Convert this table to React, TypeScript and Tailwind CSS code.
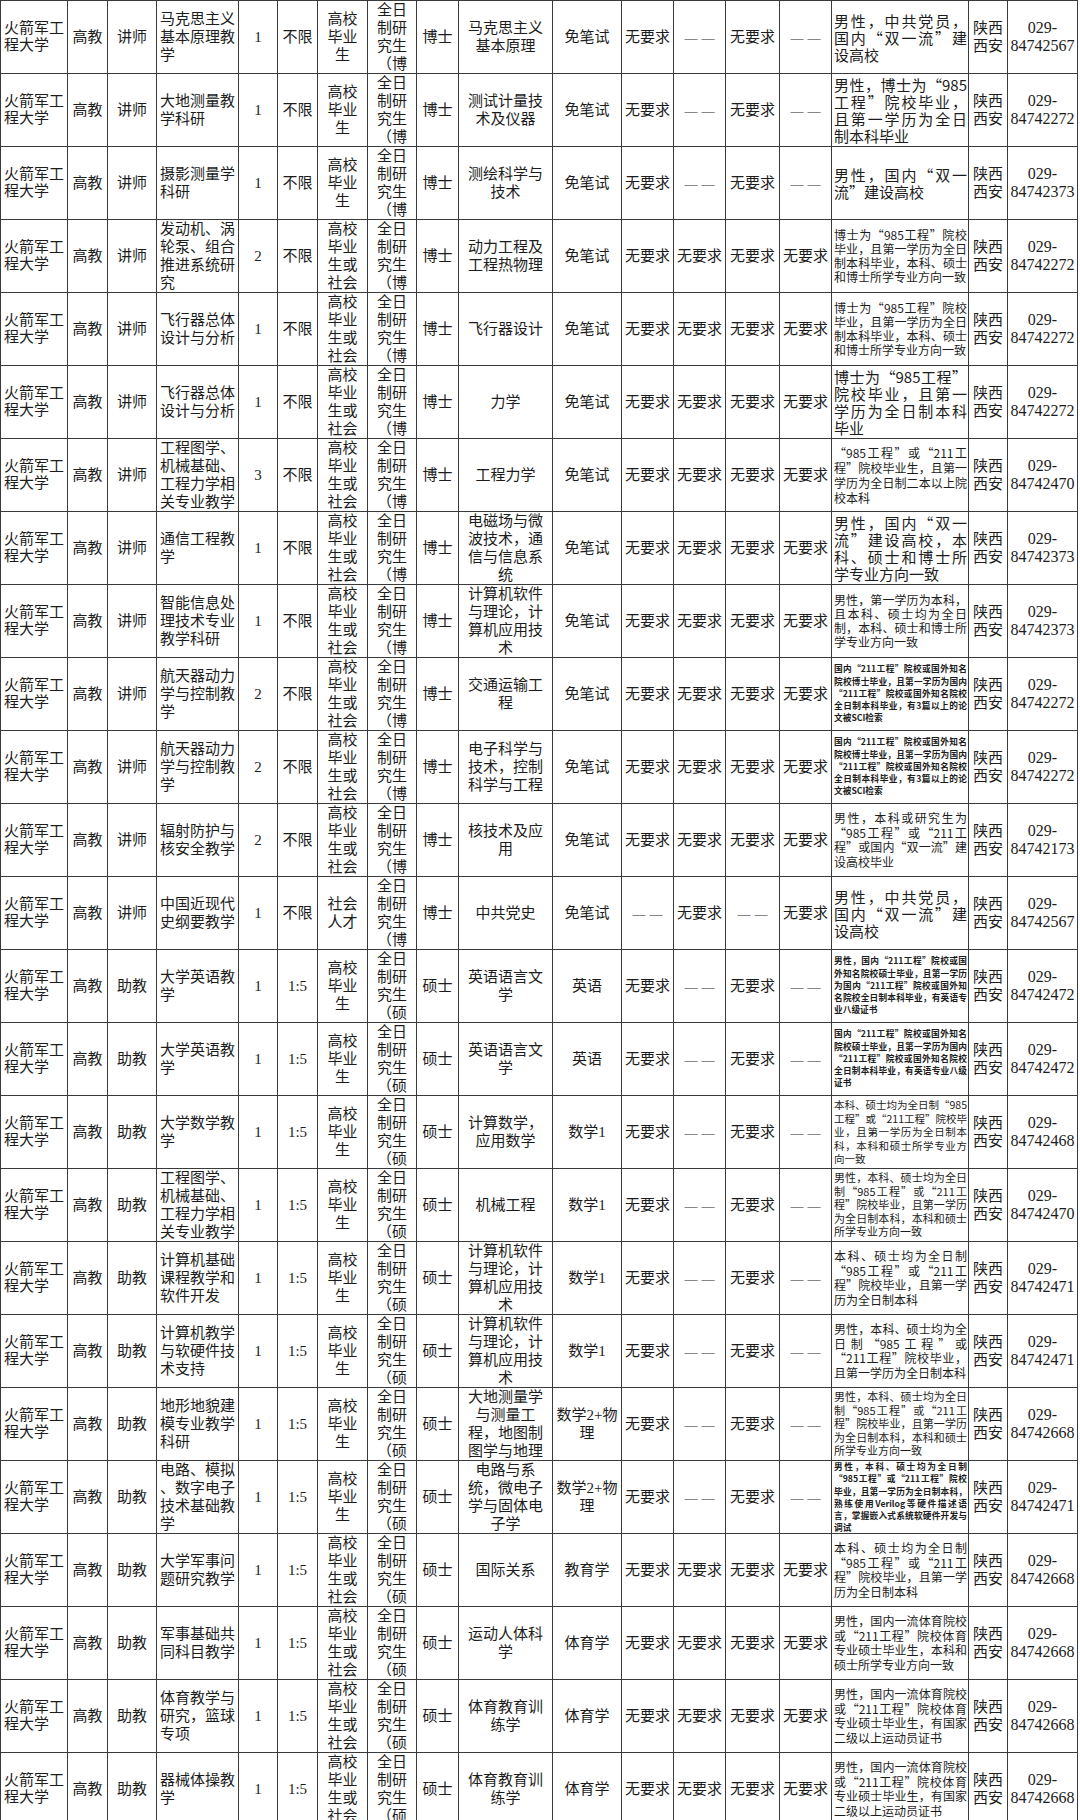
import React, { JSX } from "react";

type Row = {
	t: string;
	job: string;
	n: string;
	ratio: string;
	src: string;
	deg: string;
	major: string;
	exam: string;
	c: string[];
	req: string;
	rc: string;
	tel: string;
};

const S1 = "高校毕业生";
const S2 = "高校毕业生或社会人才";
const S3 = "社会人才";
const A = ["无要求", "——", "无要求", "——"];
const B = ["无要求", "无要求", "无要求", "无要求"];
const C = ["——", "无要求", "——", "无要求"];

// requirement text sizes
const L = "text-[15px] leading-[17px]";
const S = "text-[12px] leading-[14.5px]";
const S4 = "text-[12px] leading-[14px]";
const S7 = "text-[12px] leading-[15px]";
const X = "text-[11px] leading-[13.5px]";
const X5 = "text-[10.5px] leading-[13.5px]";
const T = "text-[8.7px] leading-[12.3px] font-bold";

const q985 = "博士为“985工程”院校毕业，且第一学历为全日制本科毕业，本科、硕士和博士所学专业方向一致";
const q211 =
	"国内“211工程”院校或国外知名院校博士毕业，且第一学历为国内“211工程”院校或国外知名院校全日制本科毕业，有3篇以上的论文被SCI检索";
const qPE = "男性，国内一流体育院校或“211工程”院校体育专业硕士毕业生，有国家二级以上运动员证书";
const qBK = "本科、硕士均为全日制“985工程”或“211工程”院校毕业，且第一学历为全日制本科";
const qMS = "男性，本科、硕士均为全日制“985工程”或“211工程”院校毕业，且第一学历为全日制本科，本科和硕士所学专业方向一致";

const rows: Row[] = [
	{ t: "讲师", job: "马克思主义基本原理教学", n: "1", ratio: "不限", src: S1, deg: "博", major: "马克思主义基本原理", exam: "免笔试", c: A, req: "男性，中共党员，国内“双一流”建设高校", rc: L, tel: "84742567" },
	{ t: "讲师", job: "大地测量教学科研", n: "1", ratio: "不限", src: S1, deg: "博", major: "测试计量技术及仪器", exam: "免笔试", c: A, req: "男性，博士为“985工程”院校毕业，且第一学历为全日制本科毕业", rc: L, tel: "84742272" },
	{ t: "讲师", job: "摄影测量学科研", n: "1", ratio: "不限", src: S1, deg: "博", major: "测绘科学与技术", exam: "免笔试", c: A, req: "男性，国内“双一流”建设高校", rc: L, tel: "84742373" },
	{ t: "讲师", job: "发动机、涡轮泵、组合推进系统研究", n: "2", ratio: "不限", src: S2, deg: "博", major: "动力工程及工程热物理", exam: "免笔试", c: B, req: q985, rc: S4, tel: "84742272" },
	{ t: "讲师", job: "飞行器总体设计与分析", n: "1", ratio: "不限", src: S2, deg: "博", major: "飞行器设计", exam: "免笔试", c: B, req: q985, rc: S4, tel: "84742272" },
	{ t: "讲师", job: "飞行器总体设计与分析", n: "1", ratio: "不限", src: S2, deg: "博", major: "力学", exam: "免笔试", c: B, req: "博士为“985工程”院校毕业，且第一学历为全日制本科毕业", rc: L, tel: "84742272" },
	{ t: "讲师", job: "工程图学、机械基础、工程力学相关专业教学", n: "3", ratio: "不限", src: S2, deg: "博", major: "工程力学", exam: "免笔试", c: B, req: "“985工程”或“211工程”院校毕业生，且第一学历为全日制二本以上院校本科", rc: S7, tel: "84742470" },
	{ t: "讲师", job: "通信工程教学", n: "1", ratio: "不限", src: S2, deg: "博", major: "电磁场与微波技术，通信与信息系统", exam: "免笔试", c: B, req: "男性，国内“双一流”建设高校，本科、硕士和博士所学专业方向一致", rc: L, tel: "84742373" },
	{ t: "讲师", job: "智能信息处理技术专业教学科研", n: "1", ratio: "不限", src: S2, deg: "博", major: "计算机软件与理论，计算机应用技术", exam: "免笔试", c: B, req: "男性，第一学历为本科，且本科、硕士均为全日制，本科、硕士和博士所学专业方向一致", rc: S4, tel: "84742373" },
	{ t: "讲师", job: "航天器动力学与控制教学", n: "2", ratio: "不限", src: S2, deg: "博", major: "交通运输工程", exam: "免笔试", c: B, req: q211, rc: T, tel: "84742272" },
	{ t: "讲师", job: "航天器动力学与控制教学", n: "2", ratio: "不限", src: S2, deg: "博", major: "电子科学与技术，控制科学与工程", exam: "免笔试", c: B, req: q211, rc: T, tel: "84742272" },
	{ t: "讲师", job: "辐射防护与核安全教学", n: "2", ratio: "不限", src: S2, deg: "博", major: "核技术及应用", exam: "免笔试", c: B, req: "男性，本科或研究生为“985工程”或“211工程”或国内“双一流”建设高校毕业", rc: S, tel: "84742173" },
	{ t: "讲师", job: "中国近现代史纲要教学", n: "1", ratio: "不限", src: S3, deg: "博", major: "中共党史", exam: "免笔试", c: C, req: "男性，中共党员，国内“双一流”建设高校", rc: L, tel: "84742567" },
	{ t: "助教", job: "大学英语教学", n: "1", ratio: "1:5", src: S1, deg: "硕", major: "英语语言文学", exam: "英语", c: A, req: "男性，国内“211工程”院校或国外知名院校硕士毕业，且第一学历为国内“211工程”院校或国外知名院校全日制本科毕业，有英语专业八级证书", rc: T, tel: "84742472" },
	{ t: "助教", job: "大学英语教学", n: "1", ratio: "1:5", src: S1, deg: "硕", major: "英语语言文学", exam: "英语", c: A, req: "国内“211工程”院校或国外知名院校硕士毕业，且第一学历为国内“211工程”院校或国外知名院校全日制本科毕业，有英语专业八级证书", rc: T, tel: "84742472" },
	{ t: "助教", job: "大学数学教学", n: "1", ratio: "1:5", src: S1, deg: "硕", major: "计算数学，应用数学", exam: "数学1", c: A, req: "本科、硕士均为全日制“985工程”或“211工程”院校毕业，且第一学历为全日制本科，本科和硕士所学专业方向一致", rc: X5, tel: "84742468" },
	{ t: "助教", job: "工程图学、机械基础、工程力学相关专业教学", n: "1", ratio: "1:5", src: S1, deg: "硕", major: "机械工程", exam: "数学1", c: A, req: qMS, rc: X, tel: "84742470" },
	{ t: "助教", job: "计算机基础课程教学和软件开发", n: "1", ratio: "1:5", src: S1, deg: "硕", major: "计算机软件与理论，计算机应用技术", exam: "数学1", c: A, req: qBK, rc: S, tel: "84742471" },
	{ t: "助教", job: "计算机教学与软硬件技术支持", n: "1", ratio: "1:5", src: S1, deg: "硕", major: "计算机软件与理论，计算机应用技术", exam: "数学1", c: A, req: "男性，" + qBK, rc: S, tel: "84742471" },
	{ t: "助教", job: "地形地貌建模专业教学科研", n: "1", ratio: "1:5", src: S1, deg: "硕", major: "大地测量学与测量工程，地图制图学与地理信息工程", exam: "数学2+物理", c: A, req: qMS, rc: X, tel: "84742668" },
	{ t: "助教", job: "电路、模拟\n、数字电子\n技术基础教\n学", n: "1", ratio: "1:5", src: S1, deg: "硕", major: "电路与系统，微电子学与固体电子学", exam: "数学2+物理", c: A, req: "男性，本科、硕士均为全日制“985工程”或“211工程”院校毕业，且第一学历为全日制本科，熟练使用Verilog等硬件描述语言，掌握嵌入式系统软硬件开发与调试", rc: T, tel: "84742471" },
	{ t: "助教", job: "大学军事问题研究教学", n: "1", ratio: "1:5", src: S2, deg: "硕", major: "国际关系", exam: "教育学", c: B, req: qBK, rc: S, tel: "84742668" },
	{ t: "助教", job: "军事基础共同科目教学", n: "1", ratio: "1:5", src: S2, deg: "硕", major: "运动人体科学", exam: "体育学", c: B, req: "男性，国内一流体育院校或“211工程”院校体育专业硕士毕业生，本科和硕士所学专业方向一致", rc: S, tel: "84742668" },
	{ t: "助教", job: "体育教学与研究，篮球专项", n: "1", ratio: "1:5", src: S2, deg: "硕", major: "体育教育训练学", exam: "体育学", c: B, req: qPE, rc: S, tel: "84742668" },
	{ t: "助教", job: "器械体操教学", n: "1", ratio: "1:5", src: S2, deg: "硕", major: "体育教育训练学", exam: "体育学", c: B, req: qPE, rc: S, tel: "84742668" },
];

const cell =
	"flex [align-items:safe_center] h-[73px] overflow-hidden border-r border-b border-[#3a3a3a] whitespace-pre-line";
const mid = `${cell} justify-center text-center px-[2px]`;

const Cell = ({ cls, children }: { cls: string; children: React.ReactNode }): JSX.Element => (
	<div className={cls}>
		<div className="w-full">{children}</div>
	</div>
);

const Dash = ({ v }: { v: string }): JSX.Element =>
	v === "——" ? <span className="text-[13px] tracking-[4px] pl-[4px]">{v}</span> : <>{v}</>;

// quote marks take a full em in the sheet
const Req = ({ s }: { s: string }): JSX.Element => (
	<>
		{s.split(/([“”])/).map((p, i) =>
			p === "“" || p === "”" ? (
				<span key={i} className="[font-variant-east-asian:full-width]">
					{p}
				</span>
			) : (
				<React.Fragment key={i}>{p}</React.Fragment>
			),
		)}
	</>
);

export default function App(): JSX.Element {
	return (
		<div lang="zh-CN" className="w-[1080px] min-h-[1820px] bg-white overflow-hidden">
			<div className="grid w-fit grid-cols-[67px_40px_49px_82px_39px_40px_50px_49px_42px_94px_69px_52px_52px_54px_52px_137px_39px_70px] border-l border-t border-[#3a3a3a] font-['Liberation_Serif','Noto_Sans_CJK_SC',serif] text-[15px] leading-[18px] text-[#1c1c1c]">
				{rows.map((r, i) => (
					<React.Fragment key={i}>
						<Cell cls={`${cell} justify-start text-left pl-[3px] pr-[2px] leading-[17px]`}>火箭军工程大学</Cell>
						<Cell cls={mid}>高教</Cell>
						<Cell cls={mid}>{r.t}</Cell>
						<Cell cls={`${cell} justify-start text-left pl-[3px] pr-[2px]`}>{r.job}</Cell>
						<Cell cls={mid}>{r.n}</Cell>
						<Cell cls={mid}>{r.ratio}</Cell>
						<Cell cls={`${cell} justify-center text-center px-[3px]`}>{r.src}</Cell>
						<Cell cls={`${cell} justify-center text-center px-[3px]`}>{`全日制研究生（${r.deg}士）`}</Cell>
						<Cell cls={mid}>{r.deg}士</Cell>
						<Cell cls={`${cell} justify-center text-center px-[3px]`}>{r.major}</Cell>
						<Cell cls={mid}>{r.exam}</Cell>
						{r.c.map((v, j) => (
							<Cell key={j} cls={mid}>
								<Dash v={v} />
							</Cell>
						))}
						<Cell
							cls={`${cell} justify-start text-justify pl-[2px] pr-[1px] font-['Noto_Sans_CJK_SC','Liberation_Serif',sans-serif] ${r.rc}`}>
							<Req s={r.req} />
						</Cell>
						<Cell cls={mid}>陕西西安</Cell>
						<Cell cls={`${cell} justify-center text-center px-[1px] text-[16px]`}>
							<span className="whitespace-nowrap">029-</span>
							<br />
							<span className="whitespace-nowrap">{r.tel}</span>
						</Cell>
					</React.Fragment>
				))}
			</div>
		</div>
	);
}
